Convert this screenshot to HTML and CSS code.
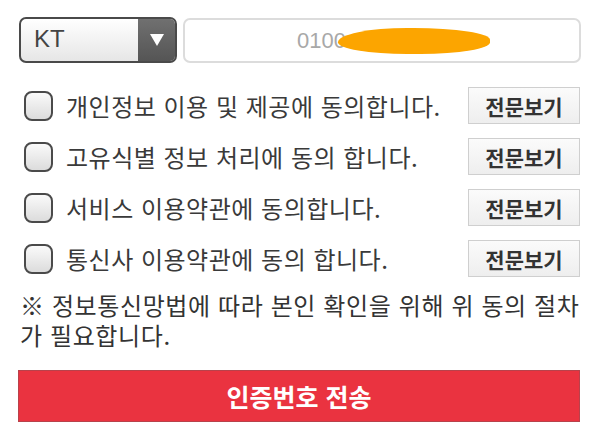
FILE: index.html
```html
<!DOCTYPE html>
<html lang="ko">
<head>
<meta charset="utf-8">
<link rel="stylesheet" href="styles.css">
</head>
<body>
<div class="page">
  <div class="top">
    <div class="select">
      <span class="select-label">KT</span>
      <span class="select-arrow"><svg width="16" height="14" viewBox="0 0 16 14"><path d="M1 1 H15 L8 13 Z" fill="#fff"/></svg></span>
    </div>
    <div class="phone">
      <span class="phone-text">0100</span>
      <span class="blob"></span>
    </div>
  </div>
  <ul class="agrees">
    <li class="row"><span class="check"></span><span class="label">개인정보 이용 및 제공에 동의합니다.</span><button class="view">전문보기</button></li>
    <li class="row"><span class="check"></span><span class="label">고유식별 정보 처리에 동의 합니다.</span><button class="view">전문보기</button></li>
    <li class="row"><span class="check"></span><span class="label">서비스 이용약관에 동의합니다.</span><button class="view">전문보기</button></li>
    <li class="row"><span class="check"></span><span class="label">통신사 이용약관에 동의 합니다.</span><button class="view">전문보기</button></li>
  </ul>
  <p class="note">※ 정보통신망법에 따라 본인 확인을 위해 위 동의 절차<br>가 필요합니다.</p>
  <button class="submit">인증번호 전송</button>
</div>
</body>
</html>
```
FILE: styles.css
```css
html, body { margin: 0; padding: 0; background: #fff; }
body { font-family: "Noto Sans CJK KR", "Noto Sans", sans-serif; color: #333; }
.page { padding: 17px 18px 0 19px; }
.top { display: flex; gap: 6px; height: 46px; }
.select {
  width: 158px; height: 46px; box-sizing: border-box;
  display: flex; border: 2px solid #4a4a4a; border-radius: 7px; overflow: hidden;
  background: linear-gradient(#ffffff, #e6e6e6);
}
.select-label { flex: 1; font-family: "Liberation Sans", Arial, sans-serif; font-size: 24px; color: #444; padding-left: 13px; line-height: 40px; }
.select-arrow {
  width: 37px; display: flex; align-items: center; justify-content: center;
  background: linear-gradient(#707070, #555555);
}
.phone {
  flex: 1; height: 45px; margin-top: 1px; box-sizing: border-box;
  border: 2px solid #dcdcdc; border-radius: 7px; background: #fff;
  position: relative; display: flex; align-items: center; padding-left: 112px;
}
.phone-text { font-family: "Liberation Sans", Arial, sans-serif; font-size: 22px; color: #a8a8a8; }
.blob {
  position: absolute; left: 153px; top: 8px; width: 152px; height: 26px;
  background: #fca500; border-radius: 50% 55% 50% 50% / 60% 50% 50% 50%;
}
.agrees { list-style: none; margin: 24px 1px 0 -1px; padding: 0; display: flex; flex-direction: column; gap: 14px; }
.row { display: flex; align-items: center; height: 37px; }
.check {
  width: 29px; height: 30px; box-sizing: border-box; margin-left: 6px;
  border: 2px solid #4a4a4a; border-radius: 8px;
  background: linear-gradient(#fafafa, #dcdcdc);
}
.label { flex: 1; margin-left: 13px; font-size: 24px; color: #3a3a3a; white-space: nowrap; letter-spacing: 0.5px; }
.view {
  width: 112px; height: 37px; box-sizing: border-box; padding: 0;
  border: 1px solid #cfcfcf; background: linear-gradient(#fbfbfb, #eeeeee);
  font-family: "Noto Sans CJK KR", sans-serif; font-size: 21px; font-weight: 700; color: #333;
}
.note { margin: 13px 0 0 1px; font-size: 24px; line-height: 30px; color: #333; white-space: nowrap; letter-spacing: 0.6px; }
.submit {
  display: block; width: 562px; height: 52px; margin: 20px 0 0 -1px; box-sizing: border-box;
  border: 1px solid #b8424b; background: #ea3340; color: #fff;
  font-family: "Noto Sans CJK KR", sans-serif; font-size: 25px; font-weight: 700;
}
```
